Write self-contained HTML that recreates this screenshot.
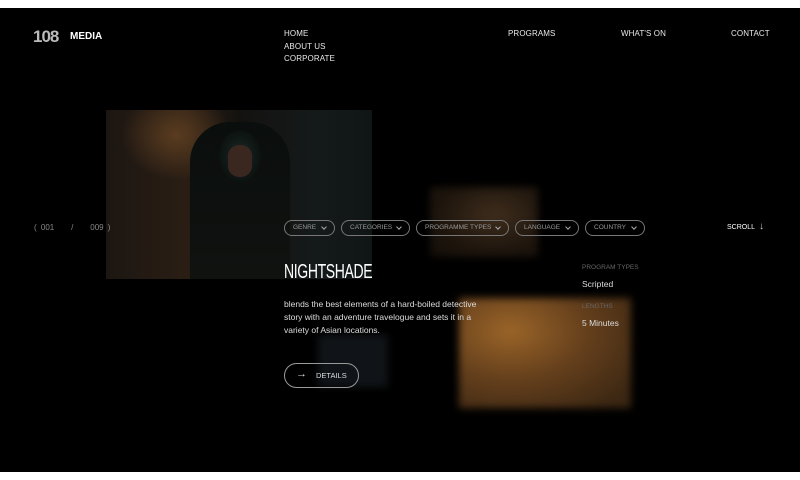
<!DOCTYPE html>
<html><head><meta charset="utf-8"><style>
*{margin:0;padding:0;box-sizing:border-box}
body{width:800px;height:480px;background:#fff;position:relative;overflow:hidden;font-family:"Liberation Sans",sans-serif;color:#eee}
#bg{position:absolute;left:0;top:8px;width:800px;height:464px;background:#000}
.a{position:absolute;white-space:nowrap}
.nav{font-size:8px;color:#e8e8e8;letter-spacing:.1px}
.pill{position:absolute;top:220px;height:16px;border:1px solid #777;border-radius:9px;font-size:6.5px;color:#999;line-height:14px;padding-left:8px}
.pill:after{content:"";position:absolute;right:8px;top:4px;width:3px;height:3px;border-right:1px solid #aaa;border-bottom:1px solid #aaa;transform:rotate(45deg)}
.blur{position:absolute;filter:blur(4px)}
</style></head><body>
<div id="bg"></div>
<div class="blur" style="left:430px;top:187px;width:108px;height:70px;background:radial-gradient(ellipse at 60% 40%,#4a3522,#241a10 60%,#16100a);opacity:.85"></div>
<div class="blur" style="left:318px;top:335px;width:70px;height:52px;background:#141a1e;opacity:.8"></div>
<div class="blur" style="left:459px;top:298px;width:172px;height:110px;background:radial-gradient(ellipse at 30% 30%,#9a6428,#643f1c 45%,#3a2612 90%)"></div>
<div class="a" style="left:106px;top:110px;width:266px;height:169px;background:radial-gradient(ellipse 55px 45px at 70px 25px,#5a3c20,transparent),linear-gradient(90deg,#1c1612,#2a1e14 30%,#141210 50%,#141a1a 80%,#101616);"></div>
<div class="a" style="left:190px;top:122px;width:100px;height:157px;background:radial-gradient(ellipse 26px 32px at 50px 34px,#1c2a26,#0c1210 80%,transparent 81%),linear-gradient(#0a0e0c,#101210);border-radius:40px 40px 0 0"></div>
<div class="a" style="left:228px;top:145px;width:24px;height:32px;background:#3a2820;border-radius:11px"></div>
<div class="a" style="left:33px;top:27px;font-size:17px;font-weight:bold;color:#bbb;letter-spacing:-1px">108</div>
<div class="a" style="left:70px;top:31px;font-size:10px;font-weight:bold;color:#fff">MEDIA</div>
<div class="a nav" style="left:284px;top:28px;line-height:12.5px">HOME<br>ABOUT US<br>CORPORATE</div>
<div class="a nav" style="left:508px;top:29px">PROGRAMS</div>
<div class="a nav" style="left:621px;top:29px">WHAT'S ON</div>
<div class="a nav" style="left:731px;top:29px">CONTACT</div>
<div class="a" style="left:34px;top:223px;font-size:8px;color:#888;word-spacing:2px">( 001 &nbsp;&nbsp; / &nbsp;&nbsp; 009 )</div>
<div class="pill" style="left:284px;width:51px">GENRE</div>
<div class="pill" style="left:341px;width:69px">CATEGORIES</div>
<div class="pill" style="left:416px;width:93px">PROGRAMME TYPES</div>
<div class="pill" style="left:515px;width:64px">LANGUAGE</div>
<div class="pill" style="left:585px;width:60px">COUNTRY</div>
<div class="a" style="left:727px;top:224px;font-size:7px;color:#fff">SCROLL</div>
<div class="a" style="left:759px;top:221px;font-size:10px;color:#ccc">↓</div>
<div class="a" style="left:284px;top:261px;font-family:'Liberation Sans Narrow','Liberation Sans',sans-serif;font-size:20px;color:#fff;transform:scaleX(.7);transform-origin:left;letter-spacing:-.5px">NIGHTSHADE</div>
<div class="a" style="left:284px;top:298px;font-size:8.5px;line-height:13px;color:#ddd">blends the best elements of a hard-boiled detective<br>story with an adventure travelogue and sets it in a<br>variety of Asian locations.</div>
<div class="a" style="left:582px;top:264px;font-size:6.5px;color:#666">PROGRAM TYPES</div>
<div class="a" style="left:582px;top:279px;font-size:8.5px;color:#ddd">Scripted</div>
<div class="a" style="left:582px;top:303px;font-size:6.5px;color:#666">LENGTHS</div>
<div class="a" style="left:582px;top:318px;font-size:8.5px;color:#ddd">5 Minutes</div>
<div class="a" style="left:284px;top:363px;width:75px;height:25px;border:1px solid #999;border-radius:13px"></div>
<div class="a" style="left:296px;top:368px;font-size:11px;color:#ddd">→</div>
<div class="a" style="left:316px;top:371px;font-size:7.5px;color:#ddd">DETAILS</div>
</body></html>
